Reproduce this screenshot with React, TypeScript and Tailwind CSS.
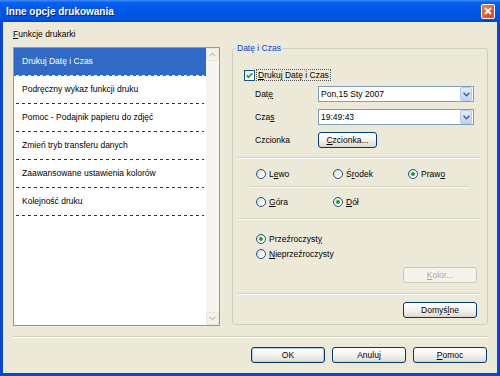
import React from "react";

const U = ({ children }: { children: React.ReactNode }) => <span className="underline underline-offset-[1px]">{children}</span>;

function XPButton({ children, className = "", disabled = false }: { children: React.ReactNode; className?: string; disabled?: boolean }) {
  return (
    <div
      className={`h-[16px] flex items-center justify-center rounded-[3px] border text-[8.5px] leading-none ${
        disabled
          ? "border-[#C9C7BA] text-[#ACA899] bg-[#F5F4EA]"
          : "border-[#003C74] text-black bg-[linear-gradient(180deg,#FFFFFF_0%,#F4F3EE_50%,#E3E0D6_90%,#D6D0C5_100%)]"
      } ${className}`}
    >
      {children}
    </div>
  );
}

function Radio({ checked = false, children, className = "" }: { checked?: boolean; children: React.ReactNode; className?: string }) {
  return (
    <div className={`flex items-center gap-[3px] h-[12px] ${className}`}>
      <span className="w-[10px] h-[10px] rounded-full border border-[#1C5180] bg-[linear-gradient(135deg,#D8D7D0,#FFFFFF_70%)] flex items-center justify-center shrink-0">
        {checked && <span className="w-[4px] h-[4px] rounded-full bg-[#21A121]" />}
      </span>
      <span>{children}</span>
    </div>
  );
}

function Combo({ value }: { value: string }) {
  return (
    <div className="w-[156px] h-[16px] border border-[#7F9DB9] bg-white flex items-center">
      <span className="flex-1 pl-[2px]">{value}</span>
      <span className="w-[12px] h-[14px] mr-[1px] rounded-[2px] border border-[#B9C9EF] bg-[linear-gradient(180deg,#E2EBFD,#C2D3FA)] flex items-center justify-center">
        <svg width="7" height="5" viewBox="0 0 7 5">
          <path d="M0.5 0.8 L3.5 3.8 L6.5 0.8" fill="none" stroke="#4D6185" strokeWidth="1.5" />
        </svg>
      </span>
    </div>
  );
}

function Sep({ className = "" }: { className?: string }) {
  return <div className={`h-[2px] border-t border-[#D0D0BF] bg-white ${className}`} />;
}

const items = [
  "Drukuj Datę i Czas",
  "Podręczny wykaz funkcji druku",
  "Pomoc - Podajnik papieru do zdjęć",
  "Zmień tryb transferu danych",
  "Zaawansowane ustawienia kolorów",
  "Kolejność druku",
];

function ScrollArrow({ up }: { up: boolean }) {
  return (
    <div className="w-[13px] h-[13px] rounded-[2px] border border-[#E8E6DC] bg-[#F3F2EB] flex items-center justify-center">
      <svg width="7" height="5" viewBox="0 0 7 5">
        <path d={up ? "M0.5 4.2 L3.5 1.2 L6.5 4.2" : "M0.5 0.8 L3.5 3.8 L6.5 0.8"} fill="none" stroke="#C9C7BA" strokeWidth="1.4" />
      </svg>
    </div>
  );
}

export default function App() {
  return (
    <div className="w-[500px] h-[376px] flex flex-col font-['Liberation_Sans',Arial,sans-serif] text-[8.5px] text-black bg-[#0A48D4] overflow-hidden">
      {/* Title bar */}
      <div className="h-[22px] shrink-0 flex items-center justify-between pl-[6px] pr-[5px] bg-[linear-gradient(180deg,#3D8EF7_0%,#0A5FEC_12%,#0057E6_50%,#0052DF_88%,#0043C8_100%)]">
        <span className="text-white font-bold text-[10px] [text-shadow:1px_1px_0_#0A1E80]">Inne opcje drukowania</span>
        <div className="w-[14px] h-[15px] rounded-[2px] border border-white bg-[linear-gradient(135deg,#E97B55,#D9431C)] flex items-center justify-center">
          <svg width="8" height="8" viewBox="0 0 8 8">
            <path d="M1 1 L7 7 M7 1 L1 7" stroke="white" strokeWidth="1.8" />
          </svg>
        </div>
      </div>

      {/* Body */}
      <div className="flex-1 mx-[3px] mb-[3px] bg-[#ECE9D8] flex flex-col pl-[10px] pr-[9px]">
        <div className="flex gap-[12px]">
          {/* Left column */}
          <div className="w-[207px] flex flex-col">
            <div className="mt-[7px] h-[10px] leading-[10px]">
              <U>F</U>unkcje drukarki
            </div>
            <div className="mt-[8px] h-[279px] border border-[#7F9DB9] bg-white flex">
              <div className="flex-1 flex flex-col">
                {items.map((it, i) => (
                  <div
                    key={it}
                    className={`h-[28px] flex flex-col ${i === 0 ? "bg-[#316AC5] text-white" : ""}`}
                  >
                    <div className="flex-1 flex items-center pl-[8px]">{it}</div>
                    <div
                      className={`h-[1px] mx-[2px] ${
                        i === 0
                          ? "bg-[repeating-linear-gradient(90deg,#E8EEF8_0_3px,transparent_3px_6px)]"
                          : "bg-[repeating-linear-gradient(90deg,#333333_0_3px,transparent_3px_6px)]"
                      }`}
                    />
                  </div>
                ))}
              </div>
              <div className="w-[13px] bg-[#F6F5F0] flex flex-col justify-between">
                <ScrollArrow up />
                <ScrollArrow up={false} />
              </div>
            </div>
          </div>

          {/* Right group */}
          <div className="relative mt-[26px] w-[256px] h-[277px] border border-[#D0D0BF] rounded-[3px] flex flex-col">
            <span className="absolute -top-[7px] left-[3px] px-[1px] bg-[#ECE9D8] leading-[12px] text-[#0046D5]">Datę i Czas</span>

            <div className="mt-[20px] h-[12px] flex items-center pl-[11px]">
              <span className="w-[11px] h-[11px] border border-[#1C5180] bg-[linear-gradient(135deg,#DCDBD4,#FFFFFF_70%)] flex items-center justify-center">
                <svg width="7" height="7" viewBox="0 0 7 7">
                  <path d="M0.8 3.4 L2.6 5.3 L6.2 1.2" fill="none" stroke="#21A121" strokeWidth="1.6" />
                </svg>
              </span>
              <span className="ml-[1px] px-[1px] h-[12px] leading-[11px] border border-dotted border-[#555]">
                <U>D</U>rukuj Datę i Czas
              </span>
            </div>

            <div className="mt-[5px] h-[16px] flex items-center pl-[22px]">
              <span className="w-[63px]">Dat<U>ę</U></span>
              <Combo value="Pon,15 Sty 2007" />
            </div>
            <div className="mt-[7px] h-[16px] flex items-center pl-[22px]">
              <span className="w-[63px]">Cza<U>s</U></span>
              <Combo value="19:49:43" />
            </div>
            <div className="mt-[7px] h-[16px] flex items-center pl-[22px]">
              <span className="w-[63px]">Czcionka</span>
              <XPButton className="w-[59px]">
                <U>C</U>zcionka...
              </XPButton>
            </div>

            <Sep className="mt-[9px] ml-[5px] w-[241px]" />

            <div className="mt-[9px] flex pl-[23px]">
              <Radio className="w-[77px]">
                L<U>e</U>wo
              </Radio>
              <Radio className="w-[75px]">
                Ś<U>r</U>odek
              </Radio>
              <Radio checked>
                Praw<U>o</U>
              </Radio>
            </div>

            <Sep className="mt-[6px] ml-[17px] w-[218px]" />

            <div className="mt-[8px] flex pl-[23px]">
              <Radio className="w-[77px]">
                <U>G</U>óra
              </Radio>
              <Radio checked>
                <U>D</U>ół
              </Radio>
            </div>

            <Sep className="mt-[10px] ml-[5px] w-[241px]" />

            <div className="mt-[13px] pl-[23px]">
              <Radio checked>
                Przeźroczyst<U>y</U>
              </Radio>
            </div>
            <div className="mt-[3px] pl-[23px]">
              <Radio>
                <U>N</U>ieprzeźroczysty
              </Radio>
            </div>

            <div className="mt-[7px] pl-[170px]">
              <XPButton disabled className="w-[74px]">
                <U>K</U>olor...
              </XPButton>
            </div>

            <Sep className="mt-[10px] ml-[5px] w-[241px]" />

            <div className="mt-[7px] pl-[170px]">
              <XPButton className="w-[74px]">
                Domyś<U>l</U>ne
              </XPButton>
            </div>
          </div>
        </div>

        <Sep className="mt-[10px] w-[476px]" />

        <div className="mt-[9px] flex justify-end gap-[7px] pr-[1px]">
          <XPButton className="w-[74px] shadow-[inset_0_0_0_1px_#B4CBF0]">OK</XPButton>
          <XPButton className="w-[74px]">Anuluj</XPButton>
          <XPButton className="w-[74px]">
            <U>P</U>omoc
          </XPButton>
        </div>
      </div>
    </div>
  );
}
